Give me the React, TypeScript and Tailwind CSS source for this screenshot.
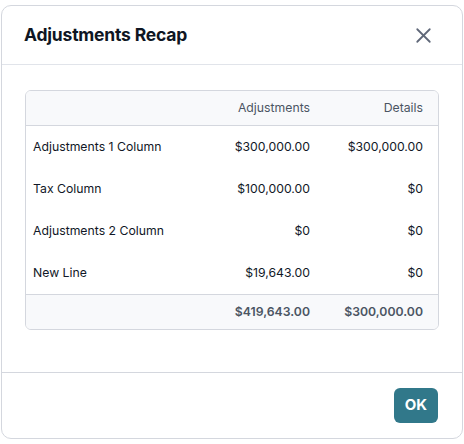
import { X } from "lucide-react";

const rows = [
  { label: "Adjustments 1 Column", adjustments: "$300,000.00", details: "$300,000.00" },
  { label: "Tax Column", adjustments: "$100,000.00", details: "$0" },
  { label: "Adjustments 2 Column", adjustments: "$0", details: "$0" },
  { label: "New Line", adjustments: "$19,643.00", details: "$0" },
];

export default function App() {
  return (
    <div className="h-[444px] w-[464px] bg-white pl-px pt-[5px] font-['Inter',sans-serif] text-[#111827]">
      <div className="flex h-[434px] w-[462px] flex-col rounded-[10px] border border-[#d4d7de] bg-white">
        <header className="flex h-[59px] shrink-0 items-center justify-between border-b border-[#e1e4ea] pl-[22px] pr-[26px]">
          <h2 className="text-[17.5px] font-bold tracking-[-0.2px] text-[#0f1623]">Adjustments Recap</h2>
          <button type="button" className="text-[#5f6778]" aria-label="Close">
            <X className="h-[25px] w-[25px]" strokeWidth={1.7} />
          </button>
        </header>

        <div className="flex-1 px-[23px] pt-[25px]">
          <div className="overflow-hidden rounded-[6px] border border-[#d4d7de] text-[12.25px]">
            <div className="grid h-[35px] grid-cols-[1fr_125px_113px] items-center border-b border-[#d4d7de] bg-[#f8f9fb] text-[#4b5563]">
              <div />
              <div className="pr-[15px] text-right">Adjustments</div>
              <div className="pr-[15px] text-right">Details</div>
            </div>
            {rows.map((row) => (
              <div
                key={row.label}
                className="grid h-[42px] grid-cols-[1fr_125px_113px] items-center pt-px text-[#111827]"
              >
                <div className="pl-[7px]">{row.label}</div>
                <div className="pr-[15px] text-right">{row.adjustments}</div>
                <div className="pr-[15px] text-right">{row.details}</div>
              </div>
            ))}
            <div className="grid h-[35px] grid-cols-[1fr_125px_113px] items-center border-t border-[#d4d7de] bg-[#f8f9fb] font-semibold text-[#4b5563]">
              <div />
              <div className="pr-[15px] text-right">$419,643.00</div>
              <div className="pr-[15px] text-right">$300,000.00</div>
            </div>
          </div>
        </div>

        <footer className="flex h-[66px] shrink-0 justify-end border-t border-[#d4d7de] px-6 pt-[15px]">
          <button
            type="button"
            className="h-[35px] w-[44px] rounded-[6px] bg-[#31788a] text-[15px] font-bold text-white"
          >
            OK
          </button>
        </footer>
      </div>
    </div>
  );
}
